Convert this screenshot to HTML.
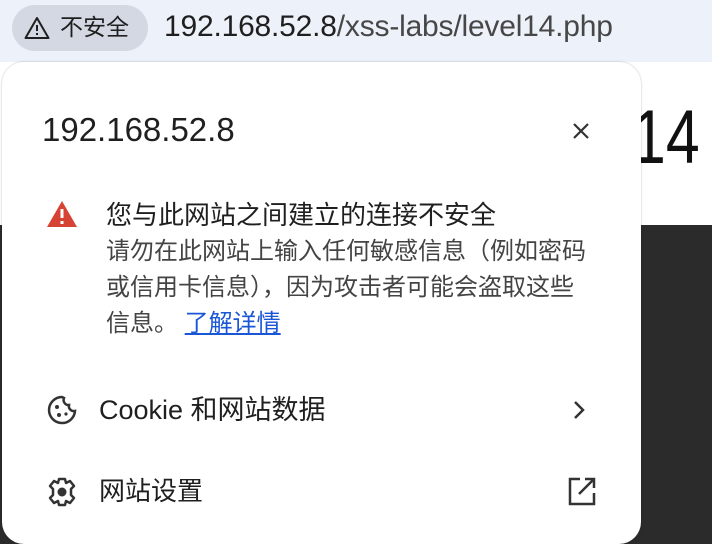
<!DOCTYPE html>
<html><head><meta charset="utf-8"><style>
*{margin:0;padding:0;box-sizing:border-box}
html,body{width:712px;height:544px;overflow:hidden}
body{position:relative;background:#fff;font-family:"Liberation Sans","Noto Sans CJK SC",sans-serif;color:#1f1f1f}
.top{position:absolute;left:0;top:0;width:712px;height:62px;background:#edf1f9}
.pill{position:absolute;left:12px;top:5px;width:136px;height:46px;border-radius:23px;background:#d3d8e2;font-size:23px;line-height:44px;color:#1f1f1f}
.url{position:absolute;left:164px;top:9px;font-size:30px;line-height:36px;color:#1f1f1f;letter-spacing:-0.2px}
.url span{color:#474747}
.dark{position:absolute;left:0;top:225px;width:712px;height:319px;background:#2b2b2b}
.big{position:absolute;left:632px;top:98px;font-size:76px;line-height:80px;color:#111;transform:scaleX(0.8);transform-origin:left}
.pop{position:absolute;left:2px;top:62px;width:639px;height:482px;background:#fff;border-radius:22px;box-shadow:0 0 2px rgba(0,0,0,.25)}
</style></head><body>
<div class="top">
<div class="pill"><svg style="position:absolute;left:12px;top:11px" width="26" height="24" viewBox="0 0 26 24"><path d="M13 2L1.5 22h23z" fill="none" stroke="#1f1f1f" stroke-width="2" stroke-linejoin="round"/><path d="M13 9v6M13 17v2" stroke="#1f1f1f" stroke-width="2"/></svg><span style="position:absolute;left:48px">不安全</span></div>
<div class="url">192.168.52.8<span>/xss-labs/level14.php</span></div>
</div>
<div class="dark"></div>
<div class="big">14</div>
<div class="pop">
<div style="position:absolute;left:40px;top:48px;font-size:33px;line-height:40px">192.168.52.8</div>
<svg style="position:absolute;left:569px;top:59px" width="20" height="20" viewBox="0 0 20 20"><path d="M3 3L17 17M17 3L3 17" stroke="#333" stroke-width="2.2"/></svg>
<svg style="position:absolute;left:44px;top:138px" width="32" height="28" viewBox="0 0 32 28"><path d="M16 1L1 27h30z" fill="#d64334"/><path d="M16 9v9M16 21v3" stroke="#fff" stroke-width="3"/></svg>
<div style="position:absolute;left:104px;top:138px;font-size:26px;line-height:30px;color:#1f1f1f;white-space:nowrap">您与此网站之间建立的连接不安全</div>
<div style="position:absolute;left:104px;top:172px;width:520px;font-size:24px;line-height:36px;color:#444;white-space:nowrap">请勿在此网站上输入任何敏感信息（例如密码<br>或信用卡信息），因为攻击者可能会盗取这些<br>信息。 <span style="color:#1a56d6;text-decoration:underline">了解详情</span></div>
<svg style="position:absolute;left:44px;top:332px" width="32" height="32" viewBox="0 0 32 32"><path d="M16 3A13 13 0 1 0 29 17 5 5 0 0 1 23 11 5 5 0 0 1 18 4 13 13 0 0 0 16 3z" fill="none" stroke="#333" stroke-width="2.5"/><circle cx="11" cy="13" r="2" fill="#333"/><circle cx="13" cy="21" r="2" fill="#333"/><circle cx="20" cy="20" r="1.6" fill="#333"/></svg>
<div style="position:absolute;left:97px;top:333px;font-size:27px;line-height:30px;white-space:nowrap">Cookie 和网站数据</div>
<svg style="position:absolute;left:567px;top:337px" width="20" height="22" viewBox="0 0 20 22"><path d="M6 3l8 8-8 8" fill="none" stroke="#333" stroke-width="2.5"/></svg>
<svg style="position:absolute;left:44px;top:414px" width="32" height="32" viewBox="0 0 32 32"><path d="M13 3h6l1 4 4-2 4 5-3 3 0 6 3 3-4 5-4-2-1 4h-6l-1-4-4 2-4-5 3-3v-6L4 10l4-5 4 2z" fill="none" stroke="#333" stroke-width="2.5" stroke-linejoin="round"/><circle cx="16" cy="16" r="4.5" fill="#333"/></svg>
<div style="position:absolute;left:97px;top:414px;font-size:26px;line-height:30px">网站设置</div>
<svg style="position:absolute;left:565px;top:414px" width="30" height="30" viewBox="0 0 30 30"><path d="M13 3H3v25h24V17" fill="none" stroke="#333" stroke-width="2.5"/><path d="M18 3h9v9M27 3L12 18" fill="none" stroke="#333" stroke-width="2.5"/></svg>
</div>
</body></html>
